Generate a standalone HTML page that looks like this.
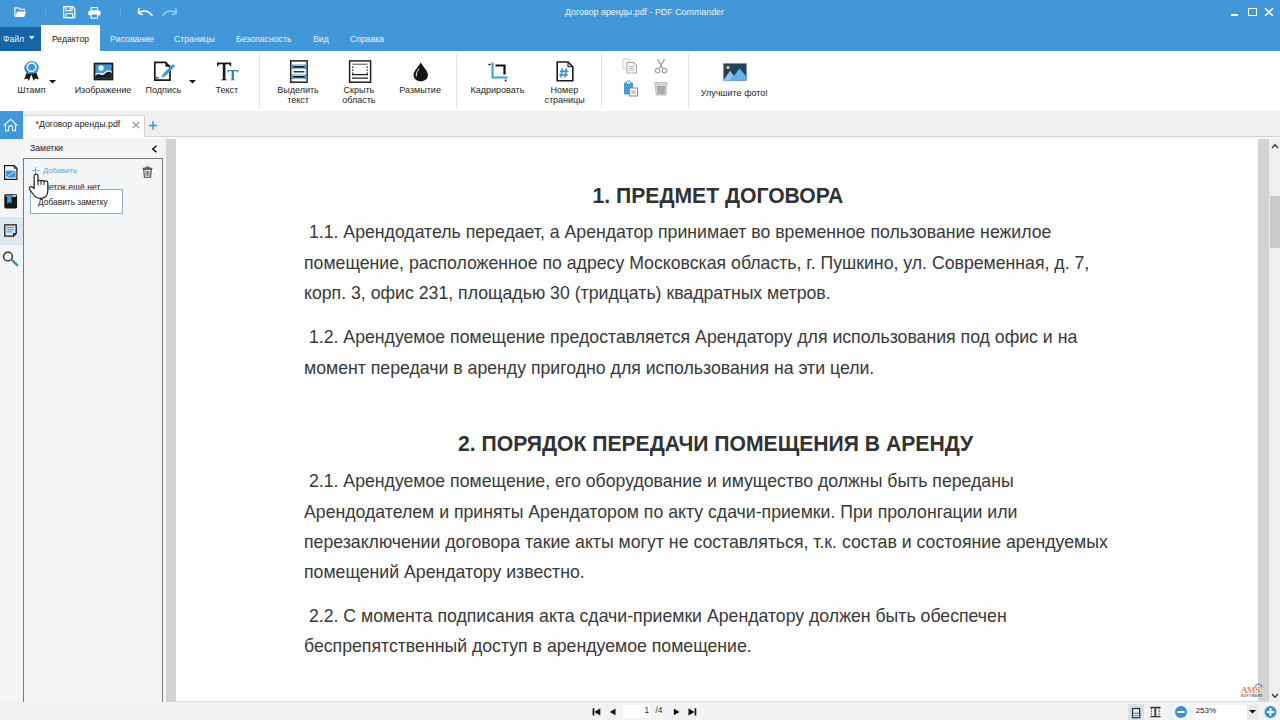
<!DOCTYPE html>
<html><head><meta charset="utf-8">
<style>
*{margin:0;padding:0;box-sizing:border-box}
html,body{width:1280px;height:720px;overflow:hidden;background:#f3f4f6;font-family:"Liberation Sans",sans-serif;position:relative}
.a{position:absolute}
.t{position:absolute;white-space:nowrap;line-height:1}
#titlebar{left:0;top:0;width:1280px;height:51px;background:#4197d8}
#file{left:0;top:27px;width:41px;height:24px;background:#1765a7}
#edtab{left:41px;top:25px;width:59px;height:26px;background:#fff}
.menu{color:#e9f2fb;font-size:8.7px;top:35px}
#ribbon{left:0;top:51px;width:1280px;height:60px;background:#fff}
.rl{font-size:9px;color:#1e1e1e;text-align:center;line-height:9.5px}
.sep{width:1px;background:#e3e3e3;top:54px;height:54px}
#tabstrip{left:0;top:111px;width:1280px;height:28px;background:#efeff0}
#doc{left:176px;top:139px;width:1082px;height:563px;background:#fefefe}
.dl{font-size:17.7px;color:#393939}
.h{font-size:21.15px;font-weight:bold;color:#323232}
</style></head><body>
<!-- title bar -->
<div id="titlebar" class="a"></div>
<div id="file" class="a"></div>
<div id="edtab" class="a"></div>
<div class="t" style="left:565px;top:8.4px;font-size:8.9px;color:#eef5fc">Договор аренды.pdf - PDF Commander</div>
<!-- folder -->
<svg class="a" style="left:13.5px;top:7.3px" width="13" height="11" viewBox="0 0 13 11"><path d="M0.9 9.5V0.9H4.6L5.8 2.2H10.3V3.8" fill="none" stroke="#fff" stroke-width="1.1"/><path d="M3.4 4.4H12.3L10.2 9.9H0.9z" fill="#fff"/></svg>
<div class="a" style="left:45px;top:5.5px;width:1px;height:12px;background:#5ea8e0"></div>
<!-- save -->
<svg class="a" style="left:63.3px;top:6.2px" width="13" height="13" viewBox="0 0 13 13"><path d="M0.7 0.7H9.8L11.8 2.7V11.6H0.7z" fill="none" stroke="#fff" stroke-width="1.25"/><path d="M3 0.7V4.6H9V0.7" fill="none" stroke="#fff" stroke-width="1.1"/><rect x="6.5" y="1.5" width="1.4" height="2" fill="#fff"/><rect x="3" y="7.6" width="6.6" height="4" fill="none" stroke="#fff" stroke-width="1.1"/></svg>
<!-- print -->
<svg class="a" style="left:88.3px;top:6.6px" width="13" height="12" viewBox="0 0 13 12"><rect x="3.2" y="0.6" width="6.4" height="3.2" fill="none" stroke="#fff" stroke-width="1.1"/><rect x="0.3" y="3.6" width="12.2" height="5" rx="1.6" fill="#fff"/><rect x="3.2" y="7" width="6.4" height="4.2" fill="#4197d8" stroke="#fff" stroke-width="1.1"/></svg>
<div class="a" style="left:120px;top:5.5px;width:1px;height:12px;background:#5ea8e0"></div>
<!-- undo -->
<svg class="a" style="left:136px;top:7px" width="18" height="10" viewBox="0 0 18 10"><path d="M3.2 5.8C6.5 3 12 3 16.2 8.6" fill="none" stroke="#fff" stroke-width="1.5" stroke-linecap="round"/><path d="M2.9 1.6L2.5 6.4L6.5 7.6" fill="none" stroke="#fff" stroke-width="1.5" stroke-linecap="round" stroke-linejoin="round"/></svg>
<!-- redo -->
<svg class="a" style="left:161px;top:7px" width="18" height="10" viewBox="0 0 18 10"><path d="M1.6 8.6C5.8 3 11.3 3 14.6 5.8" fill="none" stroke="#9fd0f4" stroke-width="1.4" stroke-linecap="round"/><path d="M14.9 1.6L15.3 6.4L11.3 7.6" fill="none" stroke="#9fd0f4" stroke-width="1.4" stroke-linecap="round" stroke-linejoin="round"/></svg>
<!-- window controls -->
<div class="a" style="left:1231px;top:14px;width:7px;height:2px;background:#fff"></div>
<div class="a" style="left:1248px;top:8px;width:8.5px;height:8px;border:1.5px solid #fff"></div>
<svg class="a" style="left:1264px;top:7px" width="10" height="10" viewBox="0 0 10 10"><path d="M1 1.2L9 9M9 1.2L1 9" stroke="#fff" stroke-width="1.6"/></svg>

<div class="t menu" style="left:3px;color:#e6f0fa;font-size:8.6px">Файл</div>
<svg class="a" style="left:28.8px;top:36.2px" width="6" height="4" viewBox="0 0 6 4"><path d="M0 0h5.4L2.7 3.5z" fill="#fff"/></svg>
<div class="t menu" style="left:52px;color:#222;font-size:8.6px">Редактор</div>
<div class="t menu" style="left:110px">Рисование</div>
<div class="t menu" style="left:174px">Страницы</div>
<div class="t menu" style="left:236px">Безопасность</div>
<div class="t menu" style="left:313px">Вид</div>
<div class="t menu" style="left:350px">Справка</div>

<!-- ribbon -->
<div id="ribbon" class="a"></div>
<!-- stamp -->
<svg class="a" style="left:22px;top:59.3px" width="19" height="23" viewBox="0 0 19 23">
<path d="M5 12.5L2.2 20.6L5.5 19.6L6.8 22L9.3 15.5L11.8 22L13.1 19.6L16.8 20.6L14 12.5z" fill="#1a1a1a"/>
<path d="M9.6 14.6C8.5 14.6 7.5 15.2 6.6 14.9C5.6 14.5 4.5 14.3 3.9 13.5C3.2 12.7 3 11.6 2.6 10.6C2.2 9.6 2 8.6 2.4 7.5C2.8 6.5 3.5 5.7 4.1 4.9C4.8 4 5.5 3.1 6.6 2.7C7.6 2.3 8.6 2 9.6 2C10.7 2 11.7 2.4 12.7 2.8C13.7 3.2 14.7 3.8 15.3 4.7C15.9 5.6 16.6 6.5 16.8 7.6C17 8.7 16.7 9.7 16.4 10.7C16 11.7 15.5 12.8 14.6 13.5C13.7 14.2 12.5 14.3 11.5 14.6C10.9 14.7 10.2 14.6 9.6 14.6z" fill="#3d8fcd"/>
<circle cx="9.6" cy="8.3" r="5" fill="#fff"/>
<circle cx="9.6" cy="8.3" r="3.5" fill="#3f95d6"/>
</svg>
<svg class="a" style="left:49px;top:80px" width="7" height="4" viewBox="0 0 7 4"><path d="M0 0h7L3.5 3.6z" fill="#111"/></svg>
<div class="t rl" style="left:-18.50px;top:86px;width:100px">Штамп</div>
<!-- image -->
<svg class="a" style="left:93px;top:62px" width="21" height="19" viewBox="0 0 21 19">
<rect x="1.5" y="1.5" width="18" height="16" fill="#3f95d6" stroke="#1a1a1a" stroke-width="1.7"/>
<circle cx="8" cy="6" r="2.7" fill="#fff"/>
<path d="M2.4 12C4.5 10.5 6.5 10.3 8.5 11.3C10.5 12.3 12.5 8.5 15 8.2C16.5 8 18.6 9.5 18.6 9.5V11C17 10 16 9.5 15 9.8C12.5 10.5 10.5 14 8.5 13C6.5 12 4.5 12.2 2.4 13.5z" fill="#fff"/>
<path d="M2.4 13.5C4.5 12.2 6.5 12 8.5 13C10.5 14 12.5 10.5 15 9.8C16 9.5 17 10 18.6 11V16.6H2.4z" fill="#1e1e1e"/>
</svg>
<div class="t rl" style="left:53.00px;top:86px;width:100px">Изображение</div>
<!-- signature -->
<svg class="a" style="left:153px;top:61px" width="23" height="21" viewBox="0 0 23 21">
<path d="M1.8 1.3H12.5L17 5.8V19.2H1.8z" fill="#fff" stroke="#1a1a1a" stroke-width="1.7"/>
<path d="M12.5 1.3L17 5.8H12.5z" fill="#1a1a1a"/>
<path d="M19.6 3.6C20.6 2.9 22.3 4.4 21.6 5.4L12.2 15.2L9.8 13z" fill="#3f95d6"/>
<path d="M9.8 13L12.2 15.2L8.6 16.8z" fill="#3f95d6"/>
<rect x="3.3" y="15.8" width="1" height="2" fill="#1a1a1a"/><rect x="4.3" y="16.4" width="1.6" height="0.9" fill="#1a1a1a"/>
</svg>
<svg class="a" style="left:189px;top:80px" width="7" height="4" viewBox="0 0 7 4"><path d="M0 0h7L3.5 3.6z" fill="#111"/></svg>
<div class="t rl" style="left:113.40px;top:86px;width:100px">Подпись</div>
<!-- Tt -->
<svg class="a" style="left:216px;top:62px" width="23" height="19" viewBox="0 0 23 19">
<path d="M1 0.5H15.2V4.6H14.4C14 2.8 13.3 2.3 11.5 2.3H9.4V16.4C9.4 17.4 9.9 17.6 11.4 17.7V18.3H4.8V17.7C6.3 17.6 6.8 17.4 6.8 16.4V2.3H4.7C2.9 2.3 2.2 2.8 1.8 4.6H1z" fill="#161616"/>
<path d="M11.4 8H22.2V10.8H21.6C21.3 9.7 20.9 9.3 19.8 9.3H18V17C18 17.6 18.4 17.8 19.4 17.9V18.3H14.2V17.9C15.2 17.8 15.6 17.6 15.6 17V9.3H13.8C12.7 9.3 12.3 9.7 12 10.8H11.4z" fill="#2a8ac6"/>
</svg>
<div class="t rl" style="left:176.75px;top:86px;width:100px">Текст</div>
<div class="a sep" style="left:259px"></div>
<!-- highlight -->
<svg class="a" style="left:289px;top:60px" width="20" height="24" viewBox="0 0 20 24">
<rect x="1.7" y="0.9" width="16.4" height="21.3" fill="#fff" stroke="#1f1f1f" stroke-width="1.5"/>
<rect x="2.4" y="4.5" width="15" height="4.6" fill="#3e8fcb"/>
<rect x="2.4" y="14.5" width="15" height="4.6" fill="#3e8fcb"/>
<rect x="4.5" y="4.8" width="11" height="4" fill="#a9d0ec"/>
<rect x="4.5" y="14.8" width="11" height="4" fill="#a9d0ec"/>
<rect x="4.5" y="6" width="11" height="1.7" fill="#111"/>
<rect x="4.5" y="11" width="11" height="1.5" fill="#333"/>
<rect x="4.5" y="16" width="11" height="1.7" fill="#111"/>
</svg>
<div class="t rl" style="left:248.00px;top:86px;width:100px">Выделить</div>
<div class="t rl" style="left:248.00px;top:95.5px;width:100px">текст</div>
<!-- hide area -->
<svg class="a" style="left:348px;top:60px" width="24" height="24" viewBox="0 0 24 24">
<rect x="1.6" y="0.9" width="21" height="21.3" fill="#fff" stroke="#1f1f1f" stroke-width="1.5"/>
<path d="M4.5 4.2H19.5" stroke="#333" stroke-width="0.9"/>
<path d="M4.7 6.6v1.3M4.7 9.6v1.3M4.7 12.6v1.3M19.2 6.6v1.3M19.2 9.6v1.3M19.2 12.6v1.3" stroke="#222" stroke-width="1.2"/>
<path d="M4 14.7H20M4 18.1H20" stroke="#222" stroke-width="1.2"/>
</svg>
<div class="t rl" style="left:308.90px;top:86px;width:100px">Скрыть</div>
<div class="t rl" style="left:308.80px;top:95.5px;width:100px">область</div>
<!-- blur drop -->
<svg class="a" style="left:412px;top:61px" width="17" height="21" viewBox="0 0 17 21">
<path d="M8.8 1.2C10.2 5 16 9.5 16 14C16 17.8 12.8 20.3 8.8 20.3C4.8 20.3 1.5 17.8 1.5 14C1.5 9.5 7.4 5 8.8 1.2z" fill="#151515"/>
<path d="M7.2 7.5C5.3 9.8 4 12.2 4.3 15.5" fill="none" stroke="#fff" stroke-width="0.9"/>
</svg>
<div class="t rl" style="left:370.15px;top:86px;width:100px">Размытие</div>

<div class="a sep" style="left:456px"></div>
<!-- crop -->
<svg class="a" style="left:488px;top:61px" width="22" height="21" viewBox="0 0 22 21">
<path d="M4.5 1.5V16.5H19.5" fill="none" stroke="#3f9fd6" stroke-width="2.2"/>
<path d="M7.5 4.5H16.5V13.5" fill="none" stroke="#111" stroke-width="2.2"/>
<rect x="0.5" y="2.8" width="2" height="1.4" fill="#111"/>
<rect x="16.8" y="18.6" width="1.6" height="1.8" fill="#111"/>
</svg>
<div class="t rl" style="left:447.50px;top:86px;width:100px">Кадрировать</div>
<!-- page number -->
<svg class="a" style="left:556px;top:61px" width="18" height="21" viewBox="0 0 18 21">
<path d="M1.2 1H12L16.8 5.8V19.8H1.2z" fill="#fff" stroke="#1a1a1a" stroke-width="1.6"/>
<path d="M12 1V5.8H16.8" fill="none" stroke="#1a1a1a" stroke-width="1.1"/>
<path d="M6.3 7.5L5 16.5M10.3 7.5L9 16.5M3.8 10.3H12.3M3.3 13.8H11.8" stroke="#3f95d6" stroke-width="1.7"/>
</svg>
<div class="t rl" style="left:514.30px;top:86px;width:100px">Номер</div>
<div class="t rl" style="left:514.60px;top:95.5px;width:100px">страницы</div>

<div class="a sep" style="left:601px"></div>
<!-- copy -->
<svg class="a" style="left:622px;top:58px" width="16" height="16" viewBox="0 0 16 16">
<path d="M1 1H6.5L8.5 3V11H1z" fill="#f4f7fa" stroke="#c8d2dc" stroke-width="1"/>
<path d="M5 4.5H11.5L14.5 7.5V15H5z" fill="#fff" stroke="#a9a9a9" stroke-width="1.1"/>
<path d="M7 8.3H12.5M7 10.3H12.5M7 12.3H12.5" stroke="#a9a9a9" stroke-width="0.9"/>
</svg>
<!-- paste -->
<svg class="a" style="left:623px;top:80px" width="16" height="17" viewBox="0 0 16 17">
<rect x="1" y="2.5" width="9" height="12" rx="1" fill="#4a9ad6"/>
<rect x="3.5" y="1" width="4" height="3" rx="1" fill="#fff" stroke="#4a9ad6" stroke-width="1"/>
<rect x="6.5" y="8" width="8" height="8" fill="#fff" stroke="#8d8d8d" stroke-width="1.1"/>
<path d="M8.3 11.2H12.7M8.3 13.2H12.7" stroke="#8d8d8d" stroke-width="0.9"/>
</svg>
<!-- cut -->
<svg class="a" style="left:654px;top:58px" width="14" height="16" viewBox="0 0 14 16">
<path d="M3.5 1L8.8 10.5M10.5 1L5.2 10.5" stroke="#a6a6a6" stroke-width="1.5"/>
<circle cx="3.6" cy="12.6" r="2.3" fill="none" stroke="#a6a6a6" stroke-width="1.3"/>
<circle cx="10.4" cy="12.6" r="2.3" fill="none" stroke="#a6a6a6" stroke-width="1.3"/>
</svg>
<!-- trash grey -->
<svg class="a" style="left:654px;top:81px" width="14" height="15" viewBox="0 0 14 15">
<path d="M1 1.5H13L11.8 14H2.2z" fill="#d6d6d6" stroke="#bdbdbd" stroke-width="1"/>
<path d="M2.8 5H11.2L10.5 13H3.5z" fill="#a9a9a9"/>
</svg>

<div class="a sep" style="left:688px"></div>
<!-- enhance photo -->
<svg class="a" style="left:722px;top:62px" width="26" height="20" viewBox="0 0 26 20">
<rect x="0.5" y="0.5" width="25" height="19" fill="#e6edf3"/>
<rect x="1.5" y="1.5" width="23" height="17" fill="#2a3f58"/>
<circle cx="6" cy="5.5" r="1.6" fill="#f1d36b"/>
<path d="M1.5 18.5L8 9L12 14L17.5 6.5L24.5 14.5V18.5z" fill="#5fb2e6"/>
<path d="M1.5 18.5L8 9L11.5 13.5L7.5 18.5z" fill="#8fc6ea"/>
</svg>
<div class="t rl" style="left:684.35px;top:88.5px;width:100px">Улучшите фото!</div>


<!-- tab strip -->
<div id="tabstrip" class="a"></div>
<div class="a" style="left:0;top:111px;width:23px;height:28px;background:#4197d8"></div>
<svg class="a" style="left:3px;top:118px" width="16" height="15" viewBox="0 0 16 15"><path d="M0.7 7.6L7.6 1.2L14.5 7.6M2.6 6V12.8H5.6V9.6A2 2 0 0 1 9.6 9.6V12.8H12.6V6" fill="none" stroke="#fff" stroke-width="1.05" stroke-linejoin="round"/></svg>
<div class="a" style="left:24px;top:115px;width:121px;height:22px;background:#fff;border-top:1px solid #d6d6d6;border-right:1px solid #cfcfcf"></div><div class="a" style="left:24px;top:137px;width:121px;height:2px;background:#fcfcfc"></div>
<div class="t" style="left:35.5px;top:120px;font-size:8.8px;color:#222">*Договор аренды.pdf</div>
<svg class="a" style="left:132px;top:121px" width="8" height="8" viewBox="0 0 8 8"><path d="M0.8 0.8L7.2 7.2M7.2 0.8L0.8 7.2" stroke="#8c8c8c" stroke-width="1.1"/></svg>
<svg class="a" style="left:148px;top:120.5px" width="10" height="9" viewBox="0 0 10 9"><path d="M5 0.3V8.5M1 4.4H9" stroke="#4690cc" stroke-width="1.5"/></svg>
<div class="a" style="left:144px;top:136px;width:1136px;height:1px;background:#d4d4d4"></div><div class="a" style="left:144px;top:137px;width:1136px;height:2px;background:#f7f7f8"></div>

<!-- left -->
<div class="a" style="left:0;top:217px;width:23px;height:27.5px;background:#dde7f2"></div>
<!-- sidebar icons -->
<svg class="a" style="left:4px;top:165px" width="14" height="15" viewBox="0 0 14 15"><path d="M0.6 0.6H10.2L12.9 3.3V14.3H0.6z" fill="#fff" stroke="#1a1a1a" stroke-width="1.2"/><path d="M10.2 0.6V3.3H12.9" fill="none" stroke="#1a1a1a" stroke-width="0.9"/><rect x="2" y="5.6" width="9.6" height="7" fill="#3f95d6"/><path d="M2.2 12.2L11.4 6.2" stroke="#d6ecfa" stroke-width="0.9"/></svg>
<svg class="a" style="left:4px;top:194px" width="14" height="15" viewBox="0 0 14 15"><rect x="0.3" y="0.3" width="12.8" height="14.1" rx="1.4" fill="#161616"/><rect x="8.4" y="1.2" width="3.8" height="1.6" fill="#f2f2f2"/><path d="M1.6 1.2H8.4V2.6L7.6 3.3V9.8L5.5 8L3.2 9.8V3.3L1.6 2.4z" fill="#4a9ad6"/></svg>
<svg class="a" style="left:4px;top:224px" width="13" height="13" viewBox="0 0 13 13"><path d="M0.8 0.8H12.2V9.5L9.5 12.2H0.8z" fill="#d9e8f6" stroke="#1a1a1a" stroke-width="1.3"/><path d="M2.8 3.5H9.8M2.8 5.7H9.8M2.8 7.9H8" stroke="#3f95d6" stroke-width="1"/><path d="M9.5 12.2V9.5H12.2" fill="none" stroke="#1a1a1a" stroke-width="1"/></svg>
<svg class="a" style="left:2px;top:251px" width="17" height="17" viewBox="0 0 17 17"><circle cx="5.95" cy="5.55" r="4.4" fill="none" stroke="#1a1a1a" stroke-width="1.3"/><path d="M10.6 9.6L15.2 14.2" stroke="#3d87c0" stroke-width="2.4" stroke-linecap="round"/></svg>

<div class="t" style="left:30px;top:144px;font-size:8.6px;color:#222">Заметки</div>
<svg class="a" style="left:151px;top:145px" width="7" height="8" viewBox="0 0 7 8"><path d="M5.5 0.8L1.8 4L5.5 7.2" fill="none" stroke="#111" stroke-width="1.5"/></svg>
<div class="a" style="left:23px;top:158px;width:140px;height:545px;border:1px solid #7a7a7a;background:#f4f5f7"></div>
<svg class="a" style="left:31px;top:166px" width="9" height="9" viewBox="0 0 9 9"><path d="M4.5 0.8V8.2M0.5 4.5H8.5" stroke="#72b0e0" stroke-width="1"/></svg>
<div class="t" style="left:43px;top:166.5px;font-size:7.7px;color:#5ea5dc">Добавить</div>
<svg class="a" style="left:142px;top:166px" width="11" height="12" viewBox="0 0 11 12"><path d="M0.5 2.3H10.5M3.8 2.3V1H7.2V2.3" fill="none" stroke="#444" stroke-width="1"/><path d="M1.7 3.2H9.3L8.6 11.3H2.4z" fill="none" stroke="#444" stroke-width="1.1"/><path d="M4 4.8V9.8M5.5 4.8V9.8M7 4.8V9.8" stroke="#444" stroke-width="0.8"/></svg>
<div class="t" style="left:33px;top:183px;font-size:8.6px;color:#222">Заметок ещё нет</div>
<div class="a" style="left:30px;top:189px;width:93px;height:25px;background:#fff;border:1px solid #8fb1bd"></div>
<div class="t" style="left:38px;top:197.5px;font-size:8.4px;color:#222">Добавить заметку</div>
<!-- hand cursor -->
<svg class="a" style="left:28px;top:173px" width="22" height="27" viewBox="0 0 22 27"><path d="M6.2 13.5V3C6.2 0.6 10 0.6 10 3V8.6C10 6.8 13 6.8 13 8.6C13 6.9 16 6.9 16 8.8C16.2 7.4 19.8 7.6 19.8 10V18C19.8 22.5 17 25.3 12.5 25.3C8.5 25.3 6.5 23.5 5 21L1.6 16.3C0.6 14.6 2.6 12.6 4.4 14.1L6.2 15.6z" fill="#fff" stroke="#262626" stroke-width="1.25" stroke-linejoin="round"/><path d="M10 8.5V12.5M13 8.6V12M16 8.8V12" stroke="#262626" stroke-width="1"/></svg>
<div class="a" style="left:166px;top:139px;width:10px;height:563px;background:#d3d3d5"></div>

<!-- doc -->
<div id="doc" class="a"></div>
<div class="a" style="left:1258px;top:139px;width:11px;height:563px;background:#d3d3d5"></div>
<div class="a" style="left:1269px;top:139px;width:11px;height:563px;background:#efeff0"></div>
<div class="a" style="left:1270px;top:196px;width:10px;height:52px;background:#c9c9c9"></div>

<div class="t h" style="left:592.5px;top:185px">1. ПРЕДМЕТ ДОГОВОРА</div>
<div class="t dl" style="left:304px;top:224px">&nbsp;1.1. Арендодатель передает, а Арендатор принимает во временное пользование нежилое</div>
<div class="t dl" style="left:304px;top:255px">помещение, расположенное по адресу Московская область, г. Пушкино, ул. Современная, д. 7,</div>
<div class="t dl" style="left:304px;top:285px">корп. 3, офис 231, площадью 30 (тридцать) квадратных метров.</div>
<div class="t dl" style="left:304px;top:329px">&nbsp;1.2. Арендуемое помещение предоставляется Арендатору для использования под офис и на</div>
<div class="t dl" style="left:304px;top:360px">момент передачи в аренду пригодно для использования на эти цели.</div>
<div class="t h" style="left:458px;top:433px">2. ПОРЯДОК ПЕРЕДАЧИ ПОМЕЩЕНИЯ В АРЕНДУ</div>
<div class="t dl" style="left:304px;top:473px">&nbsp;2.1. Арендуемое помещение, его оборудование и имущество должны быть переданы</div>
<div class="t dl" style="left:304px;top:504px">Арендодателем и приняты Арендатором по акту сдачи-приемки. При пролонгации или</div>
<div class="t dl" style="left:304px;top:534px">перезаключении договора такие акты могут не составляться, т.к. состав и состояние арендуемых</div>
<div class="t dl" style="left:304px;top:564px">помещений Арендатору известно.</div>
<div class="t dl" style="left:304px;top:608px">&nbsp;2.2. С момента подписания акта сдачи-приемки Арендатору должен быть обеспечен</div>
<div class="t dl" style="left:304px;top:638px">беспрепятственный доступ в арендуемое помещение.</div>

<!-- bottom bar -->
<div class="a" style="left:0;top:702px;width:1280px;height:18px;background:#f1f2f4"></div>
<div class="a" style="left:176px;top:701px;width:1092px;height:1px;background:#dedede"></div>
<svg class="a" style="left:591.5px;top:707.5px" width="10" height="8" viewBox="0 0 10 8"><rect x="0.6" y="0.3" width="1.7" height="7.2" fill="#111"/><path d="M8.3 0.3V7.5L2.3 3.9z" fill="#111"/></svg>
<svg class="a" style="left:608.5px;top:707.5px" width="8" height="8" viewBox="0 0 8 8"><path d="M6.5 0.6V7.2L0.8 3.9z" fill="#111"/></svg>
<div class="a" style="left:623px;top:705px;width:27px;height:13px;background:#fff"></div>
<div class="t" style="left:644.5px;top:706.3px;font-size:8.4px;color:#333">1</div>
<div class="t" style="left:655.5px;top:706.3px;font-size:8.4px;color:#333">/4</div>
<svg class="a" style="left:672.5px;top:707.5px" width="8" height="8" viewBox="0 0 8 8"><path d="M0.8 0.6V7.2L6.5 3.9z" fill="#111"/></svg>
<svg class="a" style="left:687.5px;top:707.5px" width="10" height="8" viewBox="0 0 10 8"><path d="M0.5 0.3V7.5L6.5 3.9z" fill="#111"/><rect x="6.6" y="0.3" width="1.7" height="7.2" fill="#111"/></svg>
<!-- view buttons -->
<div class="a" style="left:1128px;top:704px;width:16px;height:16px;background:#d5e1ee"></div>
<svg class="a" style="left:1131px;top:707px" width="10" height="12" viewBox="0 0 10 12"><rect x="1.5" y="1.5" width="7.2" height="9.2" fill="#e6eef6" stroke="#333" stroke-width="1.3"/><path d="M2.2 6.2H8" stroke="#666" stroke-width="1"/><path d="M2.5 8.5H7.5" stroke="#888" stroke-width="1"/></svg>
<svg class="a" style="left:1150px;top:706px" width="11" height="12" viewBox="0 0 11 12"><path d="M0.3 1.5H10.6M0.3 10.6H10.6" stroke="#333" stroke-width="1.4"/><path d="M5.3 1V11.2" stroke="#444" stroke-width="2"/><path d="M1.5 2V10.5M9.2 2V10.5" stroke="#555" stroke-width="1.1" stroke-dasharray="1.6 1"/></svg>
<svg class="a" style="left:1175px;top:706px" width="12" height="12" viewBox="0 0 12 12"><circle cx="6" cy="6" r="6" fill="#3d90d2"/><rect x="2.5" y="5" width="7" height="2" fill="#fff"/></svg>
<div class="a" style="left:1194px;top:705px;width:53px;height:15px;background:#fff"></div>
<div class="a" style="left:1247px;top:705px;width:11px;height:15px;background:#e8e8e9"></div>
<div class="t" style="left:1195.5px;top:706.5px;font-size:8.1px;color:#222">253%</div>
<svg class="a" style="left:1249px;top:710px" width="7" height="4" viewBox="0 0 7 4"><path d="M0 0h7L3.5 3.6z" fill="#111"/></svg>
<svg class="a" style="left:1264px;top:706px" width="13" height="12" viewBox="0 0 13 12"><circle cx="6.5" cy="6" r="6" fill="#3d90d2"/><rect x="2.8" y="5" width="7.4" height="2" fill="#fff"/><rect x="5.5" y="2.3" width="2" height="7.4" fill="#fff"/></svg>
<!-- scroll chevrons -->
<svg class="a" style="left:1271px;top:143px" width="8" height="6" viewBox="0 0 8 6"><path d="M1 5L4 1.8L7 5" fill="none" stroke="#333" stroke-width="1.3"/></svg>
<svg class="a" style="left:1271px;top:693px" width="8" height="6" viewBox="0 0 8 6"><path d="M1 1L4 4.2L7 1" fill="none" stroke="#333" stroke-width="1.3"/></svg>
<!-- AMS logo -->
<div class="t" style="left:1241px;top:686.2px;font-family:'Liberation Serif',serif;font-size:9px;font-weight:bold;color:#e58a4e;letter-spacing:-0.4px">AMS</div>
<div class="t" style="left:1241px;top:694.6px;font-size:3px;color:#555;letter-spacing:0.6px;font-weight:bold">SOFTWARE</div>
<svg class="a" style="left:1254px;top:683px" width="9" height="6" viewBox="0 0 9 6"><path d="M1.2 4.5C1.5 2.5 2.6 1.4 4 1.2" fill="none" stroke="#5cbf60" stroke-width="1.3"/><path d="M4 1.2C5.3 1 6.5 1.5 7.2 2.5" fill="none" stroke="#4a8fe0" stroke-width="1.3"/><path d="M7.2 2.5C7.6 3 7.8 3.6 7.8 4.3" fill="none" stroke="#a04cc0" stroke-width="1.3"/></svg>
</body></html>
